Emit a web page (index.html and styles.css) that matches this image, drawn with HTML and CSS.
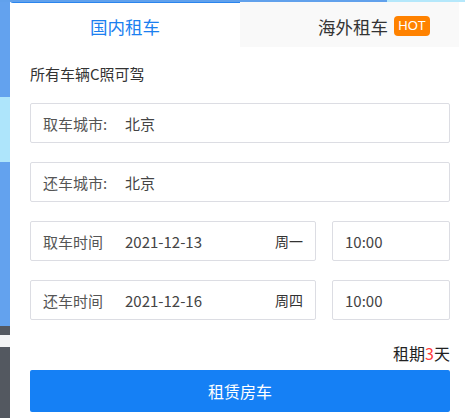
FILE: index.html
```html
<!DOCTYPE html>
<html lang="zh-CN">
<head>
<meta charset="utf-8">
<title>租车</title>
<link rel="stylesheet" href="styles.css">
</head>
<body>
<div class="page">
  <div class="card">
    <div class="tabs">
      <div class="tab tab-active">国内租车</div>
      <div class="tab tab-other"><span>海外租车</span><span class="hot">HOT</span></div>
    </div>
    <div class="content">
      <p class="note">所有车辆C照可驾</p>
      <div class="field"><span class="label">取车城市:</span><span class="value">北京</span></div>
      <div class="field"><span class="label">还车城市:</span><span class="value">北京</span></div>
      <div class="row">
        <div class="field"><span class="label">取车时间</span><span class="value">2021-12-13</span><span class="week">周一</span></div>
        <div class="field"><span class="value">10:00</span></div>
      </div>
      <div class="row row-last">
        <div class="field"><span class="label">还车时间</span><span class="value">2021-12-16</span><span class="week">周四</span></div>
        <div class="field"><span class="value">10:00</span></div>
      </div>
      <div class="period">租期<em>3</em>天</div>
      <button class="submit">租赁房车</button>
    </div>
  </div>
</div>
</body>
</html>
```
FILE: styles.css
```css
* { box-sizing: border-box; }
html, body { margin: 0; padding: 0; background: #fff; }
body {
  font-family: "Noto Sans CJK SC", "Noto Sans", sans-serif;
  color: #333;
  overflow: hidden;
}
.page {
  width: 465px;
  height: 418px;
  padding: 2px 0 0 10px;
  background:
    linear-gradient(to right, #61a1ec 0 387px, #b5e8fb 387px) top left / 100% 2px no-repeat,
    linear-gradient(to bottom,
      #63a2ee 0 97px, #aee5fb 97px 162px, #63a2ee 162px 326px,
      #535860 326px 335px, #f2f3f4 335px 347px, #535860 347px) left top / 10px 100% no-repeat,
    #fff;
}
.card {
  background: #fff;
  height: 100%;
  border-top-left-radius: 3px;
  overflow: hidden;
}
.tabs {
  display: grid;
  grid-template-columns: 230px 219px;
  height: 45px;
}
.tab {
  display: flex;
  align-items: center;
  font-size: 17.5px;
  padding-top: 3px;
}
.tab-active {
  justify-content: center;
  color: #1b7ff0;
  border-top: 1px solid #2a85ee;
  background: #fff;
}
.tab-other {
  background: #f9f9f9;
  color: #333;
  padding-left: 78px;
}
.hot {
  margin-left: 6px;
  width: 36px;
  height: 20px;
  border-radius: 4px;
  background: #ff8200;
  color: #fff;
  font-family: "Liberation Sans", Arial, sans-serif;
  font-size: 13px;
  line-height: 20px;
  text-align: center;
}
.content {
  padding: 16px 15px 0 20px;
}
.note {
  margin: 0 0 18px;
  font-size: 15px;
  line-height: 22px;
  color: #333;
}
.field {
  display: flex;
  align-items: center;
  height: 40px;
  border: 1px solid #dcdde3;
  border-radius: 2px;
  padding: 0 12px;
  font-size: 15px;
  margin-bottom: 19px;
}
.label {
  width: 82px;
  color: #555;
  flex: none;
}
.value {
  color: #444;
  flex: 1;
}
.week {
  font-size: 14px;
  color: #333;
}
.row {
  display: grid;
  grid-template-columns: 1fr 118px;
  column-gap: 16px;
}
.row-last .field { margin-bottom: 0; }
.period {
  margin-top: 22px;
  text-align: right;
  font-size: 16px;
  line-height: 22px;
  color: #222;
}
.period em {
  font-style: normal;
  color: #ff3b3b;
}
.submit {
  display: block;
  width: 100%;
  height: 42px;
  margin-top: 6px;
  border: none;
  border-radius: 2px;
  background: #1580f5;
  color: #fff;
  font-family: inherit;
  font-size: 16px;
}
```
